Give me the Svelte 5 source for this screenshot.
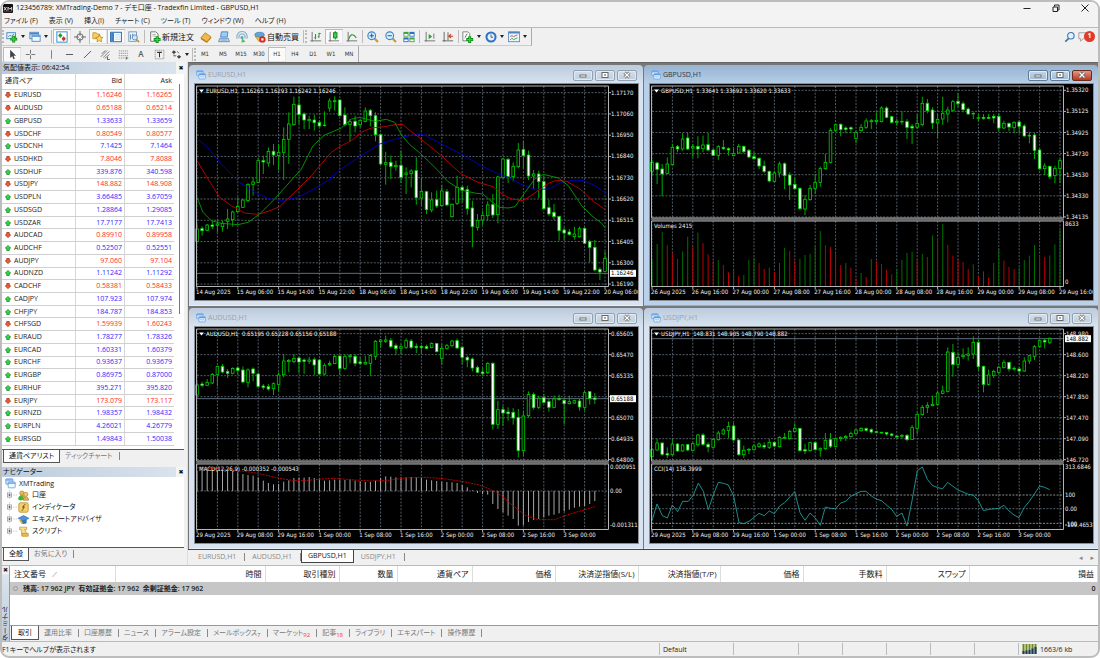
<script>
  const menus = ['ファイル (F)', '表示 (V)', '挿入(I)', 'チャート (C)', 'ツール (T)', 'ウィンドウ (W)', 'ヘルプ (H)'];

  const quotes = `EURUSD 1.16246 1.16265 d;AUDUSD 0.65188 0.65214 d;GBPUSD 1.33633 1.33659 u;USDCHF 0.80549 0.80577 d;USDCNH 7.1425 7.1464 u;USDHKD 7.8046 7.8088 d;USDHUF 339.876 340.598 u;USDJPY 148.882 148.908 d;USDPLN 3.66485 3.67059 u;USDSGD 1.28864 1.29085 u;USDZAR 17.7177 17.7413 u;AUDCAD 0.89910 0.89958 d;AUDCHF 0.52507 0.52551 u;AUDJPY 97.060 97.104 d;AUDNZD 1.11242 1.11292 u;CADCHF 0.58381 0.58433 d;CADJPY 107.923 107.974 u;CHFJPY 184.787 184.853 u;CHFSGD 1.59939 1.60243 d;EURAUD 1.78277 1.78326 u;EURCAD 1.60331 1.60379 u;EURCHF 0.93637 0.93679 u;EURGBP 0.86975 0.87000 u;EURHUF 395.271 395.820 u;EURJPY 173.079 173.117 d;EURNZD 1.98357 1.98432 u;EURPLN 4.26021 4.26779 u;EURSGD 1.49843 1.50038 u`
    .split(';').map((r) => r.split(' '));

  // Each candle: direction, high, body top, body bottom, low, in thirds of a pixel.
  const parse = (s) => s.trim().split(/\s*,\s*/).map((c) => {
    const p = c.split(' ');
    return { up: p[0] === 'u', v: p.slice(1).map(Number) };
  });

  const aug = ['26 Aug 2025', '26 Aug 16:00', '27 Aug 00:00', '27 Aug 08:00', '27 Aug 16:00', '28 Aug 00:00', '28 Aug 08:00', '28 Aug 16:00', '29 Aug 00:00', '29 Aug 08:00', '29 Aug 16:00'];
  const sep = ['29 Aug 2025', '29 Aug 08:00', '29 Aug 16:00', '1 Sep 00:00', '1 Sep 08:00', '1 Sep 16:00', '2 Sep 00:00', '2 Sep 08:00', '2 Sep 16:00', '3 Sep 00:00'];

  const charts = [
    {
      name: 'EURUSD,H1', info: '1.16265 1.16293 1.16242 1.16246', active: false, oy: -20, y0: 86, dy: 63.8,
      prices: ['1.17170', '1.17060', '1.16950', '1.16840', '1.16730', '1.16620', '1.16515', '1.16405', '1.16300', '1.16190'],
      times: ['14 Aug 2025', '15 Aug 06:00', '15 Aug 14:00', '15 Aug 22:00', '18 Aug 06:00', '18 Aug 14:00', '18 Aug 22:00', '19 Aug 06:00', '19 Aug 14:00', '19 Aug 22:00', '20 Aug 06:00'],
      bottom: 202, line: 628, tag: '1.16246', sub: null,
      candles: parse(`u 480 495 533 533,d 487 494 500 515,u 480 483 499 501,d 470 483 487 495,u 468 480 484 505,u 470 478 488 503,u 435 465 472 495,u 440 444 467 488,u 400 427 443 445,u 405 408 430 432,u 358 361 410 415,u 340 354 361 395,u 283 290 355 357,d 275 290 294 330,u 250 262 297 308,d 240 262 273 303,u 240 265 275 320,u 190 226 265 348,u 145 180 226 300,u 98 121 182 185,d 98 123 152 180,d 145 150 168 195,u 155 166 170 195,d 152 168 176 200,d 170 175 186 188,u 142 183 185 187,u 103 111 132 143,u 97 110 113 140,d 108 108 155 157,d 130 153 182 187,u 165 173 181 232,d 155 172 186 205,u 165 169 182 190,u 130 141 172 175,d 135 139 155 187,d 145 155 212 232,d 208 212 300 302,u 263 296 301 362,d 275 295 307 345,u 290 304 308 320,d 260 304 340 357,u 310 327 331 390,u 315 321 329 370,d 280 320 401 422,u 340 382 402 425,d 380 383 437 450,u 385 408 438 445,d 380 407 426 432,u 363 381 425 427,d 375 383 423 427,u 418 421 458 460,u 335 370 418 423,d 365 370 379 415,d 365 377 434 452,d 410 432 488 550,u 450 469 490 500,u 440 454 468 483,u 412 423 455 470,d 390 422 453 462,u 335 339 452 478,u 282 285 340 343,d 282 286 338 357,u 295 307 338 352,u 237 258 308 313,d 232 257 275 313,d 260 273 336 348,u 318 330 336 375,d 320 330 353 402,d 335 353 434 437,d 407 431 450 457,d 420 445 458 468,d 457 457 500 530,d 490 498 507 527,d 495 504 511 515,u 488 510 518 527,u 488 494 518 520,d 490 493 538 540,d 527 533 550 595,d 528 550 618 622,d 610 616 624 648,u 562 583 622 625`),
      lines: [
        ['#0000c8', '27,223 60,252 100,300 150,352 200,385 245,405 285,409 330,400 375,377 420,350 455,318 520,275 575,240 640,220 690,210 710,213 760,240 820,270 870,300 925,327 961,340 1001,362 1041,376 1081,375 1121,355 1161,348 1186,350 1221,365 1252,387'],
        ['#c80000', '27,290 60,345 95,400 130,425 170,447 210,451 240,442 275,428 330,375 370,335 400,300 430,265 455,248 490,230 520,205 550,192 590,188 625,181 645,182 670,203 690,218 760,275 820,330 870,355 915,368 945,392 970,405 1006,410 1036,390 1081,358 1106,349 1136,352 1176,375 1216,412 1252,437'],
        ['#00a000', '27,400 45,445 70,470 100,478 150,482 180,475 215,450 260,405 300,360 340,315 375,245 410,213 460,192 490,165 515,160 560,172 595,166 620,175 640,212 665,242 690,262 720,290 750,320 780,353 820,378 860,387 885,390 910,412 935,430 960,432 981,428 1011,385 1040,345 1066,331 1111,342 1141,365 1181,425 1211,455 1241,478 1252,492']
      ], lx: 27
    },
    {
      name: 'GBPUSD,H1', info: '1.33641 1.33692 1.33620 1.33633', active: true, oy: -20, y0: 79, dy: 63.3,
      prices: ['1.35320', '1.35125', '1.34925', '1.34730', '1.34530', '1.34330', '1.34135'],
      times: aug, bottom: 134, line: null, tag: null, sub: 'volumes', subTitle: 'Volumes 2415',
      candles: parse(`u 288 295 322 330,d 293 297 316 360,d 300 315 330 397,u 280 300 328 330,u 240 250 302 305,d 243 248 255 265,u 207 225 255 260,d 207 222 255 258,u 240 248 252 280,d 217 247 255 283,u 215 243 254 265,d 207 242 258 262,d 255 258 274 276,u 243 248 274 288,d 228 250 254 258,d 250 254 258 275,u 250 269 275 277,u 240 247 267 270,d 245 247 263 268,d 255 259 279 283,d 265 278 284 287,d 280 283 306 315,d 290 306 322 327,d 320 322 351 355,u 320 327 352 355,u 293 300 327 340,d 295 299 335 375,d 325 333 363 408,d 340 361 374 378,d 370 373 434 438,u 393 406 435 453,u 363 373 407 410,u 330 355 373 390,u 308 314 355 368,u 270 295 314 317,u 193 199 295 298,u 180 182 199 203,d 178 181 197 217,d 187 192 196 208,d 187 191 195 207,u 200 206 223 238,u 180 190 200 203,u 163 171 190 195,u 165 170 173 195,u 145 169 173 180,u 127 132 173 175,d 127 132 160 163,d 155 158 175 178,u 165 172 175 185,u 142 172 173 182,d 165 173 190 225,d 180 187 192 240,u 150 178 190 195,u 98 118 182 187,d 105 118 140 148,d 130 138 177 195,u 150 166 177 222,u 98 148 165 182,u 128 138 150 175,u 108 113 139 142,d 87 112 119 130,d 112 119 137 145,d 130 135 150 153,d 145 148 149 165,u 150 161 162 172,d 150 160 163 167,d 150 160 163 165,d 150 157 162 178,d 148 157 192 202,u 170 178 192 195,d 175 178 189 202,u 172 175 191 208,d 170 174 187 208,d 180 186 216 218,u 203 214 216 238,d 207 213 259 285,d 255 258 314 318,u 297 306 314 333,d 305 307 338 345,u 305 313 335 358,u 283 290 314 357`),
      bars: 'g585 g540 g503 r543 r570 r585 g562 g518 r548 g506 r537 r571 r590 g588 r603 r625 g615 r636 g633 g588 g581 r597 r615 g611 r624 g597 g552 r561 r590 g584 g573 g569 g546 g501 r544 r549 r570 r603 g597 r611 r644 g627 r639 g585 r591 r600 r617 r631 g615 g588 g567 g564 r585 g570 r579 g514 r523 g480 r543 r575 r585 r594 r615 g601 r636 g622 r640 g597 g555 r590 r609 r615 g611 g588 g575 g543 r575 r579 g574 g541 g498'.split(' '),
      subLabels: [['8633', 481], ['0', 654]], levels: [], lines: [], lx: 21
    },
    {
      name: 'AUDUSD,H1', info: '0.65195 0.65228 0.65156 0.65188', active: false, oy: -23, y0: 89, dy: 63,
      prices: ['0.65605', '0.65470', '0.65335', '', '0.65070', '0.64935', '0.64800'],
      times: sep, bottom: 134, line: 284, tag: '0.65188', sub: 'macd', subTitle: 'MACD(12,26,9) -0.000352 -0.000543',
      candles: parse(`u 235 243 273 275,d 233 240 244 250,u 225 235 244 246,u 207 211 237 240,u 185 187 211 247,d 180 187 204 208,d 195 202 208 222,u 190 193 208 211,d 187 192 199 212,d 188 198 234 237,u 193 198 235 250,d 190 195 208 232,d 205 210 247 250,d 240 246 250 257,d 240 248 255 260,u 235 239 254 273,u 205 213 241 262,u 150 171 212 220,u 165 169 173 205,u 150 163 173 178,d 158 162 174 207,d 163 168 172 210,u 158 168 172 180,d 160 167 183 213,d 165 168 210 213,u 178 184 210 213,u 170 178 182 187,u 152 157 179 180,d 155 156 193 213,u 150 157 193 197,u 150 155 158 178,d 150 157 178 187,d 160 174 178 183,u 155 175 180 182,u 150 155 178 215,u 108 112 157 168,u 105 108 113 130,u 95 108 112 117,d 102 109 128 133,d 118 125 134 152,u 120 128 133 150,u 103 110 130 135,d 105 111 130 135,d 118 127 131 147,d 123 127 131 147,d 122 128 133 135,u 115 118 131 133,d 117 118 143 145,u 120 133 163 182,u 120 125 133 137,u 108 111 125 130,d 103 110 132 135,d 125 130 160 180,d 155 160 168 190,d 160 165 192 202,d 185 190 205 207,d 190 204 209 215,u 175 178 206 210,d 175 178 361 377,u 290 317 361 375,d 305 317 327 365,d 310 324 329 350,d 312 325 342 362,d 315 340 440 460,u 320 336 440 455,u 262 271 335 340,d 265 271 311 317,u 275 283 310 315,d 270 281 295 298,d 285 293 310 323,u 275 285 310 313,d 272 284 286 290,d 285 289 299 360,u 275 293 299 302,u 287 290 297 300,d 285 291 309 320,u 260 266 310 320,d 262 263 283 302,d 267 282 286 300`),
      bars: '500 499 498 497 498 500 500 501 505 510 513 515 520 530 537 541 540 533 529 522 521 521 519 522 524 530 529 527 527 528 526 530 533 534 534 530 523 517 518 520 520 520 519 520 521 527 529 531 533 534 535 537 543 550 559 567 570 572 600 615 625 635 645 665 663 654 648 645 640 635 632 628 622 617 611 608 606 600 591'.split(' ').map((v) => 's' + v),
      subLabels: [['0.000951', 490], ['0.00', 561], ['-0.001311', 662]], levels: [561],
      lines: [['#d00000', '27,490 100,495 150,500 200,506 240,515 275,523 320,530 350,530 400,525 440,523 500,528 550,531 600,529 650,522 700,520 760,523 820,532 870,542 910,557 940,575 975,605 1010,633 1050,647 1100,647 1140,632 1180,620 1221,608', '2 1']], lx: 27
    },
    {
      name: 'USDJPY,H1', info: '148.831 148.905 148.790 148.882', active: false, oy: -23, y0: 89, dy: 63,
      prices: ['148.980', '148.600', '148.220', '147.850', '147.470', '147.090', '146.720'],
      times: sep, bottom: 134, line: 104, tag: '148.882', sub: 'cci', subTitle: 'CCI(14) 136.3999',
      candles: parse(`u 433 437 458 460,u 405 417 438 440,d 415 417 451 455,d 430 449 453 462,u 405 420 452 455,d 418 420 441 443,u 420 423 441 443,d 420 422 438 442,u 415 419 439 441,u 390 393 422 428,d 387 393 421 425,d 415 421 429 445,u 402 406 430 432,u 380 387 407 410,u 373 378 390 392,u 353 367 379 403,d 357 366 408 410,d 405 408 452 455,u 425 439 452 462,d 432 436 438 450,u 420 426 437 440,u 415 420 428 432,d 415 424 429 435,u 405 415 430 435,d 412 415 426 430,u 397 400 428 430,u 387 400 403 405,u 377 382 404 406,u 358 373 382 385,d 372 373 440 443,d 420 437 441 450,u 413 416 440 443,d 412 416 437 440,u 430 434 438 458,u 387 409 434 438,d 387 407 427 432,u 400 404 427 430,u 397 400 404 412,u 393 397 401 411,u 383 388 398 401,u 375 378 389 392,u 370 373 380 383,d 370 374 379 383,d 373 377 384 389,d 380 383 385 388,d 383 385 387 389,d 384 386 390 395,d 388 390 394 398,d 393 396 399 405,u 390 394 397 405,d 390 394 407 412,u 363 371 406 408,u 325 331 373 390,u 303 310 332 335,u 295 304 310 327,u 275 301 305 307,u 262 267 301 305,u 245 261 268 271,u 130 144 262 265,d 120 145 182 218,u 145 160 181 192,u 133 154 158 165,u 130 150 154 170,u 97 115 150 165,d 108 115 188 200,d 185 187 241 265,u 197 213 241 245,u 197 202 214 222,u 185 190 205 210,u 167 175 191 193,d 173 175 195 203,u 187 193 195 200,d 190 195 201 213,u 160 171 201 203,u 153 155 171 180,u 123 128 157 168,u 108 110 127 128,d 103 109 114 133,u 100 103 115 120`),
      bars: [], subLabels: [['313.6846', 490], ['100', 573], ['0.00', 614], ['-100', 659], ['-109.4653', 662]], levels: [573, 614, 658],
      lines: [['#209c9c', '21,650 36,600 52,635 67,642 82,603 98,623 113,592 130,592 145,573 160,537 175,562 190,617 205,572 220,535 236,538 250,543 266,576 282,656 297,659 315,650 342,628 358,635 373,621 388,629 404,606 419,596 449,563 465,626 480,649 495,627 510,641 526,664 541,609 556,613 572,614 587,597 602,592 617,577 633,569 648,562 663,562 679,576 694,585 709,590 740,616 755,637 771,627 786,666 801,590 817,500 832,489 847,526 862,544 878,551 893,554 908,535 924,547 939,558 954,564 970,571 985,573 1000,590 1015,620 1031,616 1061,613 1077,604 1092,621 1107,633 1122,641 1138,610 1153,592 1168,570 1184,546 1199,550 1214,557']], lx: 21
    }
  ];
  const chartTabs = ['EURUSD,H1', 'AUDUSD,H1', 'GBPUSD,H1', 'USDJPY,H1'];

  const barColor = { g: '#006c00', r: '#b80000', s: '#a8a8a8' };
  const barBase = { volumes: 666, macd: 561 };

  const terminalCols = [['注文番号', 105], ['時間', 150], ['取引種別', 74], ['数量', 58], ['通貨ペア', 75], ['価格', 83], ['決済逆指値(S/L)', 83], ['決済指値(T/P)', 82], ['価格', 83], ['手数料', 83], ['スワップ', 83], ['損益', 0]];
  const terminalTabs = [['取引'], ['運用比率'], ['口座履歴'], ['ニュース'], ['アラーム設定'], ['メールボックス', '7'], ['マーケット', '92'], ['記事', '18'], ['ライブラリ'], ['エキスパート'], ['操作履歴']];
  const tree = [['account', '口座'], ['indicator', 'インディケータ'], ['expert', 'エキスパートアドバイザ'], ['script', 'スクリプト']];
  const frames = ['M1', 'M5', 'M15', 'M30', 'H1', 'H4', 'D1', 'W1', 'MN'];
</script>

{#snippet icon(name)}
  <svg class="icon" viewBox="0 0 14 14" aria-hidden="true">
    {#if name === 'addchart'}
      <rect x="1" y="2" width="10" height="7" fill="#e8f4ff" stroke="#3a7fc0" /><path d="M2.500 7l2-2 2 1 3-2.500" fill="none" stroke="#3a7fc0" /><path d="M9 5.500v8M5 9.500h8" stroke="#0a8a14" stroke-width="3.400" /><path d="M9 6.200v6.600M5.700 9.500h6.600" stroke="#2fd43c" stroke-width="1.600" />
    {:else if name === 'windows'}
      <rect x="1" y="1.500" width="10" height="7.500" fill="#dcebfa" stroke="#4b86c4" /><path d="M1 3h10" stroke="#4b86c4" stroke-width="2" /><rect x="3.500" y="5" width="9.500" height="7" fill="#f2f8ff" stroke="#4b86c4" /><path d="M3.500 6.300h9.500" stroke="#6ea4da" stroke-width="1.600" />
    {:else if name === 'market'}
      <rect x="1" y="1" width="12" height="12" fill="#fff" stroke="#4a90d0" stroke-width="1.200" /><path d="M5 2.300l2.600 3-2.600 3-2.600-3z" fill="#18a428" /><path d="M9 6l2.600 3-2.600 3-2.600-3z" fill="#d03818" />
    {:else if name === 'cross'}
      <circle cx="7" cy="7" r="3.700" fill="none" stroke="#555" /><path d="M7 0v5.500M7 8.500V14M0 7h5.500M8.500 7H14" stroke="#555" />
    {:else if name === 'folder'}
      <path d="M1 2h4l1 1.500h3V9H1z" fill="#f7cf66" stroke="#b58418" stroke-width=".8" /><path d="M8.500 4.500l1.300 2.700 3 .4-2.100 2 .5 3-2.700-1.400-2.700 1.400.5-3-2.100-2 3-.4z" fill="#ffd964" stroke="#b07810" stroke-width=".8" />
    {:else if name === 'navpanel'}
      <rect x=".7" y="1.500" width="12.600" height="11" fill="#fff" stroke="#2b6cb4" stroke-width="1.200" /><rect x="1.300" y="2" width="3.400" height="10" fill="#3d82c8" /><path d="M6 4.500h6M6 7h6M6 9.500h6" stroke="#a9c8e6" stroke-width=".8" />
    {:else if name === 'tester'}
      <rect x="1" y="1" width="9" height="11" fill="#eef6ff" stroke="#5b86ac" stroke-width=".9" /><path d="M3 4v6M5.500 3v5M8 5v3" stroke="#4a7aa8" /><circle cx="8" cy="7.500" r="3" fill="#d9efff" fill-opacity=".7" stroke="#4a86bc" /><path d="M10 10l3 3" stroke="#c59020" stroke-width="1.800" />
    {:else if name === 'order'}
      <path d="M2 1h6l2.500 2.500V12H2z" fill="#fff" stroke="#555" stroke-width=".9" /><path d="M4 4h4M4 6h4" stroke="#888" stroke-width=".8" /><path d="M9.500 6v8M5.500 10h8" stroke="#0a8a14" stroke-width="3.400" /><path d="M9.500 6.800v6.400M6.300 10h6.400" stroke="#3bd447" stroke-width="1.600" />
    {:else if name === 'book'}
      <path d="M1 8l5-6 7 5-5 5.500z" fill="#edb94c" stroke="#a56e13" stroke-width=".8" /><path d="M1 8v1.500l7 4.500V12.500zM8 12.500V14l5-5.500V7z" fill="#b97b1c" />
    {:else if name === 'laptop'}
      <path d="M4 1h7.500l-.7 6H3z" fill="#9ecdf5" stroke="#4482bd" /><path d="M2 8.500h10l1.300 4H.7z" fill="#cfe2f5" stroke="#4a7cac" stroke-width=".9" /><path d="M3 10.500h8" stroke="#4a7cac" stroke-width=".8" />
    {:else if name === 'signal'}
      <path d="M1.500 9a6 6 0 1 1 11 0M3.800 8.600a3.600 3.600 0 1 1 6.400 0" fill="none" stroke="#8fb3cb" stroke-width="1.400" /><circle cx="7" cy="7.500" r="1.800" fill="#43a4df" /><path d="M7 8l4 4.500-4.500 1.200z" fill="#52c24c" />
    {:else if name === 'auto'}
      <ellipse cx="6.500" cy="4.500" rx="5.500" ry="3" fill="#5aa7e2" stroke="#2d6fa8" stroke-width=".7" /><path d="M1.500 6.500L6 12.500 10.500 8z" fill="#f1c455" stroke="#a3781f" stroke-width=".7" /><circle cx="9.800" cy="9.800" r="3.700" fill="#d7281c" /><rect x="8.500" y="8.500" width="2.600" height="2.600" fill="#fff" />
    {:else if name === 'bars'}
      <path d="M2.500 1v11.500M.5 11.500H13" stroke="#666" fill="none" /><path d="M6.500 3.500v6M5 8h1.500M10.500 2v6M10.500 3h2M9 7h1.500" stroke="#1f9430" stroke-width="1.200" fill="none" />
    {:else if name === 'candle'}
      <path d="M2.500 1v11.500M.5 11.500H13" stroke="#666" fill="none" /><path d="M8.500 0v10" stroke="#107a18" /><rect x="6.500" y="2" width="4" height="6" fill="#2fd63c" stroke="#107a18" />
    {:else if name === 'linechart'}
      <path d="M2.500 1v11.500M.5 11.500H13" stroke="#666" fill="none" /><path d="M3 10c2-6 5-8 9-2" stroke="#1f9430" stroke-width="1.200" fill="none" />
    {:else if name === 'zoomin' || name === 'zoomout'}
      <path d="M8.500 8.500l4.300 4.300" stroke="#d29a1c" stroke-width="2.600" /><circle cx="5.500" cy="5.500" r="4.500" fill="#d9efff" stroke="#3c83c4" stroke-width="1.300" /><path d={name === 'zoomin' ? 'M5.500 3v5M3 5.500h5' : 'M3 5.500h5'} stroke="#235d99" stroke-width="1.300" />
    {:else if name === 'tile'}
      <rect x=".5" y="1" width="6" height="5.500" fill="#3ca53f" /><rect x="7.500" y="1" width="6" height="5.500" fill="#2f6fc0" /><rect x=".5" y="7.500" width="6" height="5.500" fill="#2f6fc0" /><rect x="7.500" y="7.500" width="6" height="5.500" fill="#3ca53f" /><path d="M1.500 4.500h4M8.500 4.500h4M1.500 11h4M8.500 11h4" stroke="#fff" stroke-width="2" />
    {:else if name === 'scroll'}
      <path d="M2.500 1v11.500M.5 11.500H13M11.500 3v6" stroke="#666" fill="none" /><path d="M5.500 3.500l4 3-4 3z" fill="#22a334" />
    {:else if name === 'shift'}
      <path d="M2.500 1v11.500M.5 11.500H13M7 1.500v9" stroke="#555" fill="none" /><path d="M13 6H9M10.500 3.800L8 6l2.500 2.200" stroke="#c33a1e" stroke-width="1.200" fill="none" />
    {:else if name === 'indicators'}
      <path d="M1 1h6l2 2v8.500H1z" fill="#fff" stroke="#666" stroke-width=".9" /><path d="M3 8c2 0 1-5 3.500-4.500" stroke="#555" fill="none" /><path d="M9 6v8M5 10h8" stroke="#0a8a14" stroke-width="3.400" /><path d="M9 6.800v6.400M5.800 10h6.400" stroke="#2fd43c" stroke-width="1.600" />
    {:else if name === 'clock'}
      <circle cx="7" cy="7" r="5.300" fill="#e8f2ff" stroke="#2f74c4" stroke-width="2.400" /><path d="M7 4v3.300h2.500" fill="none" stroke="#446" />
    {:else if name === 'template'}
      <rect x=".7" y="1" width="12.600" height="11.500" fill="#eaf4ff" stroke="#4b86c4" /><path d="M.7 2h12.600" stroke="#4b86c4" stroke-width="2" /><path d="M2.500 6.500l2-1 2 1 4.500-2" stroke="#b5523a" fill="none" /><path d="M2.500 10.500l2-2 2 1.500 4.500-2" stroke="#2f9b45" fill="none" />
    {:else if name === 'cursor'}
      <path d="M4 1v10.500l2.600-2.300 1.700 3.800 1.700-.8-1.700-3.700h3.200z" fill="#444" />
    {:else if name === 'plus'}
      <path d="M7 1v5M7 8v5M1 7h5M8 7h5" stroke="#555" />
    {:else if name === 'vline'}
      <path d="M7 1.500v11" stroke="#666" />
    {:else if name === 'hline'}
      <path d="M2.500 7h9" stroke="#555" stroke-width="1.200" />
    {:else if name === 'trend'}
      <path d="M2.500 11.500l9-9" stroke="#555" stroke-width="1.200" />
    {:else if name === 'channel'}
      <path d="M1 10l8-8M4 11l8-8M2 6l5-4M6 12l6-5" stroke="#666" /><path d="M9.500 10v3.500h3" stroke="#333" fill="none" />
    {:else if name === 'fibo'}
      <path d="M1 2.500h12M1 5.500h12M1 8.500h12M1 11.500h8" stroke="#777" stroke-dasharray="1.500 1" /><path d="M10.500 10v3.500M10.500 11.500h2.500" stroke="#444" />
    {:else if name === 'label'}
      <rect x="1.500" y="1.500" width="11" height="11" fill="none" stroke="#777" stroke-dasharray="1.500 1" /><path d="M4 4.300h6M7 4.300v6.200" stroke="#333" stroke-width="1.300" />
    {:else if name === 'arrows'}
      <path d="M1 4l2.700-2.500L6.500 4 3.700 6.500zM7.500 10l2.700-2.500L13 10l-2.800 2.500z" fill="#444" /><path d="M3.700 7v2l3-.500M8 3l2 2.500" stroke="#444" fill="none" />
    {:else if name === 'search'}
      <path d="M5.500 8.500L1.500 12.500" stroke="#3b74b4" stroke-width="2" /><circle cx="8" cy="5.500" r="3.800" fill="#e6f3ff" stroke="#3b74b4" stroke-width="1.300" />
    {:else if name === 'account'}
      <circle cx="5" cy="4" r="2.800" fill="#e7bd55" stroke="#96701b" stroke-width=".7" /><path d="M1 12c0-7 8-7 8 0z" fill="#d7a434" stroke="#96701b" stroke-width=".7" /><circle cx="10" cy="5.500" r="2.600" fill="#f0cd70" stroke="#96701b" stroke-width=".7" /><path d="M6.500 13c0-6 7-6 7 0z" fill="#e3b345" stroke="#96701b" stroke-width=".7" /><circle cx="3.500" cy="10.500" r="3" fill="#35b83a" />
    {:else if name === 'indicator'}
      <rect x="1" y="1" width="12" height="12" rx="2" fill="#f3cf6c" stroke="#bb8c24" /><path d="M9.500 3.500c-2-.8-2.300.5-2.600 3.500s-.8 4-2.400 3.500M5 6.500h4" stroke="#5e4510" fill="none" />
    {:else if name === 'expert'}
      <path d="M0 5.500L7 2l7 3.500L7 9z" fill="#4b95d6" stroke="#2c6698" stroke-width=".7" /><path d="M4 8v3.500c2 1.500 5 1.500 7 0V7" fill="#3279b9" /><path d="M2 7l3.500 5" stroke="#e2b03c" stroke-width="2" />
    {:else if name === 'script'}
      <path d="M2 1.500h9v3H8.500l3.500 7H5L4 4.500H2z" fill="#f7dc8d" stroke="#c39630" stroke-width=".9" /><path d="M5 9.500h8v3.500H5z" fill="#ecc04f" stroke="#b88a26" stroke-width=".9" />
    {/if}
  </svg>
{/snippet}

{#snippet tool(name, label, pressed = false, drop = false, text = '')}
  <button class="tool" class:pressed class:drop class:wide={text} aria-label={label}>
    {@render icon(name)}{#if text}<span>{text}</span>{/if}{#if drop}<i class="caret"></i>{/if}
  </button>
{/snippet}

{#snippet panelTabs(items)}
  <div class="ptabs">
    {#each items as t, i}<button class:on={i === 0}>{t}</button>{/each}
  </div>
{/snippet}

<div class="app">
  <header class="title">
    <svg class="logo" viewBox="0 0 10 9" aria-hidden="true"><rect width="10" height="9" rx="1" fill="#111" /><path d="M1 3l2.500 3.500M3.500 3L1 6.500M5 6.500V3.200l1.800 2L8.700 3.200v3.300" stroke="#ddd" fill="none" /><path d="M1 7.700h8" stroke="#d22" stroke-width=".7" /></svg>
    <h1>123456789: XMTrading-Demo 7 - デモ口座 - Tradexfin Limited - GBPUSD,H1</h1>
    <div class="wctl">
      <button aria-label="最小化"><svg viewBox="0 0 10 10"><path d="M1.500 5.500h7" stroke="#222" /></svg></button>
      <button aria-label="元に戻す"><svg viewBox="0 0 10 10"><path d="M2 4h4.500v4.500H2zM3.500 3.500v-1.500h4.500v5h-1" fill="none" stroke="#222" /></svg></button>
      <button aria-label="閉じる"><svg viewBox="0 0 10 10"><path d="M1.500 1.500l7 7M8.500 1.500l-7 7" stroke="#222" /></svg></button>
    </div>
  </header>

  <nav class="menu">{#each menus as m}<button>{m}</button>{/each}</nav>

  <div class="bars">
    <div class="bar first">
      <i class="grip"></i>
      {@render tool('addchart', '新規チャート', false, true)}
      {@render tool('windows', 'ウィンドウ', false, true)}
      <i class="sep"></i>
      {@render tool('market', '気配値表示', true)}
      {@render tool('cross', 'データウィンドウ')}
      {@render tool('folder', 'ナビゲーター', true)}
      {@render tool('navpanel', 'ターミナル', true)}
      {@render tool('tester', 'ストラテジーテスター')}
      <i class="sep"></i>
      {@render tool('order', '新規注文', false, false, '新規注文')}
      {@render tool('book', 'メタエディター')}
      {@render tool('laptop', 'VPS')}
      {@render tool('signal', 'シグナル')}
      {@render tool('auto', '自動売買', false, false, '自動売買')}
      <i class="sep"></i><i class="grip"></i>
      {@render tool('bars', 'バーチャート')}
      {@render tool('candle', 'ローソク足', true)}
      {@render tool('linechart', 'ラインチャート')}
      <i class="sep"></i>
      {@render tool('zoomin', '拡大')}
      {@render tool('zoomout', '縮小')}
      {@render tool('tile', '整列')}
      <i class="sep"></i>
      {@render tool('scroll', '自動スクロール')}
      {@render tool('shift', 'チャートシフト')}
      <i class="sep"></i>
      {@render tool('indicators', 'インディケータ', false, true)}
      {@render tool('clock', '時間足', false, true)}
      {@render tool('template', 'テンプレート', false, true)}
    </div>
    <div class="corner">
      <button aria-label="検索">{@render icon('search')}</button>
      <button class="chat" aria-label="通知"><svg class="icon" viewBox="0 0 14 14"><path d="M1 2h9v7H6l-3 3V9H1z" fill="#eee" stroke="#999" /></svg><b>1</b></button>
    </div>
    <div class="bar second">
      {@render tool('cursor', 'カーソル', true)}
      {@render tool('plus', '十字カーソル')}
      <i class="sep hid"></i>
      {@render tool('vline', '垂直線')}
      {@render tool('hline', '水平線')}
      {@render tool('trend', 'トレンドライン')}
      {@render tool('channel', 'チャネル')}
      {@render tool('fibo', 'フィボナッチ')}
      <button class="tool letter">A</button>
      {@render tool('label', 'ラベル')}
      {@render tool('arrows', '矢印', false, true)}
      <i class="sep"></i><i class="grip"></i>
      {#each frames as f}<button class="tool frame" class:pressed={f === 'H1'}>{f}</button>{/each}
    </div>
  </div>

  <main>
    <aside>
      <div class="phead"><span>気配値表示: 06:42:54</span><button aria-label="閉じる">✖</button></div>
      <div class="quotes">
        <table>
          <thead><tr><th>通貨ペア</th><th>Bid</th><th>Ask</th></tr></thead>
          <tbody>
            {#each quotes as [s, b, a, d]}
              <tr class={d}>
                <td><svg class="dia" viewBox="0 0 8 8" aria-hidden="true">{#if d === 'u'}<path d="M4 .5L7.600 4.200H5.700V7.300H2.300V4.200H.4z" fill="#2ee048" stroke="#12801f" />{:else}<path d="M4 7.500L7.600 3.800H5.700V.7H2.300V3.800H.4z" fill="#f0603a" stroke="#a52a10" />{/if}</svg>{s}</td>
                <td>{b}</td><td>{a}</td>
              </tr>
            {/each}
          </tbody>
        </table>
        <i class="thumb"></i>
      </div>
      {@render panelTabs(['通貨ペアリスト', 'ティックチャート'])}
      <div class="phead nav"><span>ナビゲーター</span><button aria-label="閉じる">✖</button></div>
      <div class="treebox">
        <ul>
          <li class="root"><svg class="icon" viewBox="0 0 14 14"><rect x="1" y="1" width="9" height="7" rx="1" fill="#cfe4fb" stroke="#5b9ae0" /><rect x="4" y="5" width="9" height="7.500" rx="1" fill="#f3f9ff" stroke="#5b9ae0" /><path d="M1 2.500h9M4 6.500h9" stroke="#5b9ae0" stroke-width="1.500" /></svg>XMTrading</li>
          {#each tree as [ic, t]}
            <li><svg class="expand" viewBox="0 0 12 12"><path d="M3 0v12M3 6h9" stroke="#aaa" stroke-width=".8" stroke-dasharray="1 1" /><rect x=".5" y="3.500" width="5" height="5" fill="#fff" stroke="#888" stroke-width=".8" /><path d="M1.500 6h3M3 4.500v3" stroke="#235" stroke-width=".8" /></svg>{@render icon(ic)}{t}</li>
          {/each}
        </ul>
      </div>
      {@render panelTabs(['全般', 'お気に入り'])}
    </aside>

    <section class="mdi">
      <div class="space">
        {#each charts as c}
          <article class:active={c.active}>
            <div class="ctitle">
              <svg class="icon" viewBox="0 0 14 14" aria-hidden="true"><rect x="1" y="1" width="9" height="7" rx="1" fill="#cfe4fb" stroke="#5b9ae0" /><rect x="4" y="5" width="9" height="7.500" rx="1" fill="#f3f9ff" stroke="#5b9ae0" /><path d="M1 2.500h9M4 6.500h9" stroke="#5b9ae0" stroke-width="1.500" /><path d="M5.500 10.500l1.500-2 1.500 2 1.500-2 1.500 2" fill="none" stroke="#5b9ae0" stroke-width=".7" /></svg>
              <h2>{c.name}</h2>
              <button aria-label="最小化"><svg viewBox="0 0 10 8"><rect x="2" y="4" width="6" height="2" fill="#fff" stroke="#666" stroke-width=".9" /></svg></button>
              <button aria-label="最大化"><svg viewBox="0 0 10 8"><rect x="2" y="1.500" width="6" height="5" fill="#fff" stroke="#666" /><rect x="4" y="3.300" width="2" height="1.300" fill="#777" /></svg></button>
              <button class="x" aria-label="閉じる"><svg viewBox="0 0 10 8"><path d="M2.500 1.500l5 5M7.500 1.500l-5 5" stroke="#555" stroke-width="2.800" /><path d="M2.500 1.500l5 5M7.500 1.500l-5 5" stroke="#fff" stroke-width="1.400" /></svg></button>
            </div>
            <svg class="chart" viewBox="0 0 443 216" role="img" aria-label={c.name}>
              <rect width="443" height="216" fill="#000" />
              <g class="grid">
                {#each c.prices as _, k}
                  <path d="M2 {(c.y0 + c.dy * k) / 3 + c.oy}H413" />
                {/each}
                {#each Array(21) as _, k}
                  <path d="M{2 + 20.4 * k} 2V{c.sub ? 134 : 202}" />
                  {#if c.sub}<path d="M{2 + 20.4 * k} 137V202" />{/if}
                {/each}
                {#if c.sub}
                  {#each c.levels as l}<path d="M2 {l / 3 + c.oy}H413" class:bright={c.sub === 'cci' && l !== 614} />{/each}
                {/if}
              </g>
              {#if c.line}<path d="M2 {c.line / 3 + c.oy}H413" stroke="#5d6b7a" />{/if}
              {#each c.bars ?? [] as b, i}
                <path d="M{2 + 5.1 * i} {barBase[c.sub] / 3 + c.oy}V{Number(b.slice(1)) / 3 + c.oy}" stroke={barColor[b[0]]} />
              {/each}
              {#each c.candles as { up, v }, i}
                <path d="M{2 + 5.1 * i} {v[0] / 3 + c.oy}V{v[3] / 3 + c.oy}" stroke="#00a800" />
                <rect x={2 + 5.1 * i - 1.3} y={v[1] / 3 + c.oy} width="2.600" height={Math.max(0.6, (v[2] - v[1]) / 3)} fill={up ? '#000' : '#fff'} stroke="#00d000" stroke-width=".8" />
              {/each}
              <g transform="translate({2 - c.lx / 3} {c.oy}) scale({1 / 3})">
                {#each c.lines as [color, pts, dash]}
                  <polyline points={pts} fill="none" stroke={color} stroke-width=".9" stroke-dasharray={dash} vector-effect="non-scaling-stroke" />
                {/each}
              </g>
              {#if c.sub}
                <rect x="1" y="134.500" width="413" height="2" fill="#666" />
                <path d="M1.500 134V2H413.500V134z M1.500 202.500V137H413.500V202.500z" fill="none" stroke="#b4b4b4" />
              {:else}
                <path d="M1.500 202.500V2H413.500V202.500z" fill="none" stroke="#b4b4b4" />
              {/if}
              <g class="txt">
                <path d="M4 5.500h5l-2.500 3z" fill="#fff" />
                <text x="11" y="9">{c.name}&nbsp; {c.info}</text>
                {#each c.prices as p, k}
                  <path d="M414 {(c.y0 + c.dy * k) / 3 + c.oy}h2" stroke="#b4b4b4" />
                  <text x="416" y={(c.y0 + c.dy * k) / 3 + c.oy + 2}>{p}</text>
                {/each}
                {#if c.sub}
                  <text x="4" y="144">{c.subTitle}</text>
                  {#each c.subLabels as [t, y]}<text x="415" y={y / 3 + c.oy + 2}>{t}</text>{/each}
                {/if}
                {#if c.tag}
                  <rect x="415" y={c.line / 3 + c.oy - 3.5} width="26" height="7" fill="#fff" />
                  <text x="416" y={c.line / 3 + c.oy + 2} class="inv">{c.tag}</text>
                {/if}
                {#each c.times as t, k}
                  <path d="M{2 + 40.8 * k} 202v3" stroke="#b4b4b4" />
                  <text x={1 + 40.8 * k} y="210">{t}</text>
                {/each}
              </g>
            </svg>
          </article>
        {/each}
      </div>
      <div class="ctabs">
        {#each chartTabs as t}<button class:on={t === 'GBPUSD,H1'}>{t}</button>{/each}
        <span class="arrows"><button aria-label="前へ">◂</button><button aria-label="次へ">▸</button></span>
      </div>
    </section>
  </main>

  <section class="terminal">
    <div class="strip"><button aria-label="閉じる">✖</button><span>ターミナル</span></div>
    <div class="tbody">
      <div class="tgrid">
        <table>
          <colgroup>{#each terminalCols as [, w]}<col style={w ? `width:${w}px` : ''} />{/each}</colgroup>
          <thead><tr>{#each terminalCols as [t], i}<th>{t}{#if i === 0}<em>⁄</em>{/if}</th>{/each}</tr></thead>
          <tbody><tr><td colspan="11"><i class="bal"></i>残高: 17 962 JPY&nbsp; 有効証拠金: 17 962&nbsp; 余剰証拠金: 17 962</td><td>0</td></tr></tbody>
        </table>
      </div>
      <div class="ttabs">
        {#each terminalTabs as [t, n], i}<button class:on={i === 0}>{t}{#if n}<sub>{n}</sub>{/if}</button>{/each}
      </div>
    </div>
  </section>

  <footer>
    <span class="help">F1キーでヘルプが表示されます</span>
    <span class="c1">Default</span><span class="c2"></span><span class="c3"></span><span class="c3"></span><span class="c3"></span><span class="c3"></span><span class="c3"></span>
    <span class="net"><svg viewBox="0 0 15 10" aria-hidden="true"><path d="M1.500 0v10M4.500 0v10M7.500 0v10M10.500 0v10M13.500 0v10" stroke="#6f8a1c" stroke-width="2" /><path d="M1.500 7v3M4.500 6.500v3.500M7.500 6v4M10.500 4.500v5.500M13.500 3v7" stroke="#173a6c" stroke-width="2" /></svg>1663/6 kb</span>
  </footer>
</div>

<style>
  :global(body) { background: #fff; }
  :global(#app *) { box-sizing: border-box; }
  .app {
    min-height: 100vh; display: flex; flex-direction: column; overflow: hidden;
    border: 2px solid #bdbdbd; border-radius: 9px; background: #f0f0f0; color: #222;
    font: 7px/10px "Open Sans", "Noto Sans CJK JP", sans-serif; font-feature-settings: "palt";
  }
  button { font: inherit; font-feature-settings: inherit; color: inherit; border: 0; background: none; padding: 0; margin: 0; }
  h1, h2 { font: inherit; margin: 0; }
  .icon { width: 12px; height: 12px; flex: none; display: block; }
  .title { display: flex; align-items: center; height: 12px; padding-left: 1px; background: #f3f3f3; gap: 3px; }
  .logo { width: 10px; height: 9px; }
  .title h1 { flex: 1; color: #111; }
  .wctl { display: flex; padding-right: 8px; gap: 19px; }
  .wctl button, .wctl svg { width: 10px; height: 10px; display: block; }
  .menu { display: flex; gap: 11px; height: 13px; padding: 0 2px; background: #f3f3f3; }
  .menu button { white-space: nowrap; }

  .bars { display: grid; grid-template-columns: auto 1fr; border-top: 1px solid #bbb; }
  .bar { display: flex; align-items: center; justify-self: start; border-right: 1px solid #aaa; }
  .first { height: 18px; border-bottom: 1px solid #ccc; padding-right: 2px; }
  .second { height: 16px; padding-left: 1px; }
  .tool { display: flex; align-items: center; justify-content: center; width: 18px; height: 15px; flex: none; }
  .drop { width: 23px; gap: 3px; }
  .wide { width: auto; gap: 1px; font-size: 8px; color: #111; padding: 0 3px; }
  .pressed { background: #fafafa; box-shadow: inset 1px 1px #bbb, inset -1px -1px #e4e4e4; }
  .second .icon { width: 11px; height: 11px; }
  .letter { font-size: 8px; font-weight: 600; color: #555; }
  .frame { font: 6px/10px "DejaVu Sans Condensed", "DejaVu Sans", sans-serif; color: #333; }
  .caret { border: 2px solid transparent; border-top: 3px solid #222; border-bottom: 0; }
  .grip { width: 2px; height: 13px; border-left: 2px dotted #bbb; }
  .sep { width: 1px; height: 13px; margin: 0 1px; background: #bbb; }
  .hid { background: none; }
  .corner { display: flex; justify-content: flex-end; align-items: center; gap: 2px; padding-right: 2px; }
  .chat { position: relative; width: 18px; }
  .chat b { position: absolute; right: 1px; top: 0; width: 11px; height: 11px; border-radius: 6px; background: #e03a2c; color: #fff; font-size: 7px; }

  main { flex: 1; display: grid; grid-template-columns: 186px minmax(0, 1fr); }
  aside { display: flex; flex-direction: column; border-right: 1px solid #ddd; padding-bottom: 3px; }
  .phead { display: flex; justify-content: space-between; height: 12px; background: linear-gradient(90deg, #bccbdc, #dbe4ee); line-height: 12px; padding-left: 1px; margin-right: 1px; color: #111; }
  .phead button { width: 10px; background: #f4f4f4; font: 6px/10px "DejaVu Sans", sans-serif; color: #111; }
  .nav { margin-top: 3px; height: 10px; line-height: 10px; }
  .quotes { flex: 1; display: flex; justify-content: space-between; background: #fff; border-bottom: 1px solid #555; margin-right: 3px; }
  .quotes table { width: 172px; height: 372px; border-collapse: collapse; table-layout: fixed; }
  .quotes th, .quotes td { padding: 0 2px 0 0; text-align: right; border-bottom: 1px solid #d0d0d0; border-right: 1px solid #d6d6d6; font-weight: 400; line-height: 10px; }
  .quotes th { height: 15px; }
  .quotes tr > :first-child { width: 73px; text-align: left; padding-left: 3px; }
  .quotes th:last-child, .quotes td:last-child { border-right: 0; }
  .u { color: #2a2aff; } .d { color: #ff2a2a; }
  .quotes td:first-child { color: #222; }
  .dia { width: 6px; height: 6px; margin-right: 3px; vertical-align: -1px; }
  .thumb { width: 1px; height: 230px; margin: 10px 4px 0 0; background: #777; }
  .ptabs { display: flex; height: 14px; align-items: flex-start; color: #777; padding-left: 1px; }
  .ptabs button { height: 12px; padding: 0 5px; }
  .ptabs button:not(.on)::after, .ctabs > button:not(.on)::after, .ttabs button:not(.on)::after { content: ""; display: inline-block; width: 1px; height: 8px; background: #888; margin-left: 6px; vertical-align: middle; }
  .ptabs .on { height: 13px; background: #fff; color: #111; border: 1px solid #555; border-top: 0; }
  .treebox { height: 71px; background: #fff; border-bottom: 1px solid #555; margin-right: 3px; }
  ul { list-style: none; margin: 0; padding: 1px 0 0 3px; height: 59px; display: grid; grid-template-rows: repeat(5, 1fr); }
  li { display: flex; align-items: center; gap: 3px; padding-left: 2px; color: #111; }
  li .icon { width: 11px; height: 11px; }
  .root { padding-left: 0; }
  .expand { width: 10px; height: 12px; margin-right: -2px; }

  .mdi { display: flex; flex-direction: column; }
  .space { flex: 1; display: grid; grid-template-columns: 1fr 1fr; align-content: start; gap: 3px 1px; padding: 2px 0 0 1px; background: #777; border-top: 1px solid #666; border-bottom: 1px solid #444; }
  article { padding: 0 5px 5px 6px; background: linear-gradient(#bccbdd, #d7e3f0 19px, #d7e3f0); border-radius: 4px 4px 0 0; box-shadow: 0 1px #e6eef6; min-width: 0; }
  article.active { background: linear-gradient(#97b3d1, #b7cfe8 19px, #b9d1ea); box-shadow: 0 1px #5fc4dc; }
  .ctitle { display: flex; align-items: center; height: 19px; gap: 2px; color: #98a2ae; padding: 1px 1px 0; }
  .ctitle .icon { width: 10px; height: 10px; }
  .active .ctitle { color: #2a3644; }
  .ctitle h2 { flex: 1; }
  .ctitle button { width: 20px; height: 11px; border: 1px solid #92a1b2; border-radius: 2px; background: linear-gradient(#d3deea, #bfcedd); display: grid; place-items: center; box-shadow: inset 0 0 0 1px #e2eaf2; }
  .ctitle button svg { width: 10px; height: 8px; }
  .active .ctitle button { border-color: #5f7893; background: linear-gradient(#c5d7ea, #9fb8d2); }
  .active .ctitle .x { background: linear-gradient(#dc9a88, #b8391c); border-color: #6e2a1c; box-shadow: none; }
  .chart { display: block; width: 100%; outline: 1px solid #8b8f94; }
  .grid path { stroke: #667380; stroke-width: .8; stroke-dasharray: 2 1.4; fill: none; }
  .grid .bright { stroke: #b0b0b0; }
  .txt { font: 6px "DejaVu Sans Condensed", "DejaVu Sans", sans-serif; fill: #f0f0f0; }
  .inv { fill: #000; }
  .ctabs { display: flex; height: 15px; padding-left: 3px; color: #888; }
  .ctabs > button { height: 14px; padding: 0 0 0 7px; }
  .ctabs > button:not(.on)::after { margin-left: 8px; }
  .ctabs > .on { background: #fff; color: #111; border: 1px solid #444; border-top: 0; padding: 0 6px; height: 13px; }
  .arrows { margin-left: auto; display: flex; gap: 8px; padding-right: 4px; font-family: "DejaVu Sans", sans-serif; }

  .terminal { display: flex; height: 77px; border-top: 1px solid #bbb; border-bottom: 1px solid #bbb; }
  .strip { width: 7px; display: flex; flex-direction: column; justify-content: space-between; background: linear-gradient(#f0f0f0 8px, #dbe4ee 9px, #bccbdc); overflow: hidden; }
  .strip button { font: 6px/8px "DejaVu Sans", sans-serif; }
  .strip span { writing-mode: vertical-rl; transform: rotate(180deg); line-height: 8px; }
  .tbody { flex: 1; min-width: 0; display: flex; flex-direction: column; border-left: 1px solid #999; }
  .tgrid { flex: 1; background: #fff; border-bottom: 1px solid #999; }
  .tgrid table { width: 100%; table-layout: fixed; border-collapse: collapse; }
  .tgrid th { height: 16px; padding: 0 3px 0 0; text-align: right; font-weight: 400; border-right: 1px solid #ddd; font-size: 8px; color: #222; white-space: nowrap; }
  .tgrid th:first-child { text-align: left; padding-left: 4px; }
  .tgrid em { margin-left: 8px; color: #888; }
  .tgrid td { height: 13px; padding: 0 3px; background: #c6c6c6; font-weight: 600; }
  .tgrid td:last-child { text-align: right; padding-right: 2px; }
  .bal { display: inline-block; width: 5px; height: 5px; border: 1px solid #999; border-radius: 3px; margin-right: 5px; vertical-align: middle; }
  .ttabs { display: flex; height: 15px; color: #777; padding-left: 1px; }
  .ttabs button { padding: 0 0 0 5px; height: 14px; white-space: nowrap; }
  .ttabs .on { background: #fff; color: #111; border: 1px solid #555; border-top: 0; padding: 0 6px; }
  sub { color: #f33; font-size: 6px; line-height: 0; }

  footer { display: flex; align-items: center; height: 14px; color: #222; }
  footer span { height: 12px; line-height: 13px; border-left: 1px solid #bbb; width: 44px; }
  footer .help { flex: 1; border: 0; padding-left: 0; }
  footer .c1 { width: 74px; padding-left: 3px; } footer .c2 { width: 65px; }
  footer .net { width: 80px; display: flex; align-items: center; gap: 3px; padding-left: 3px; }
  .net svg { width: 15px; height: 10px; }
</style>
